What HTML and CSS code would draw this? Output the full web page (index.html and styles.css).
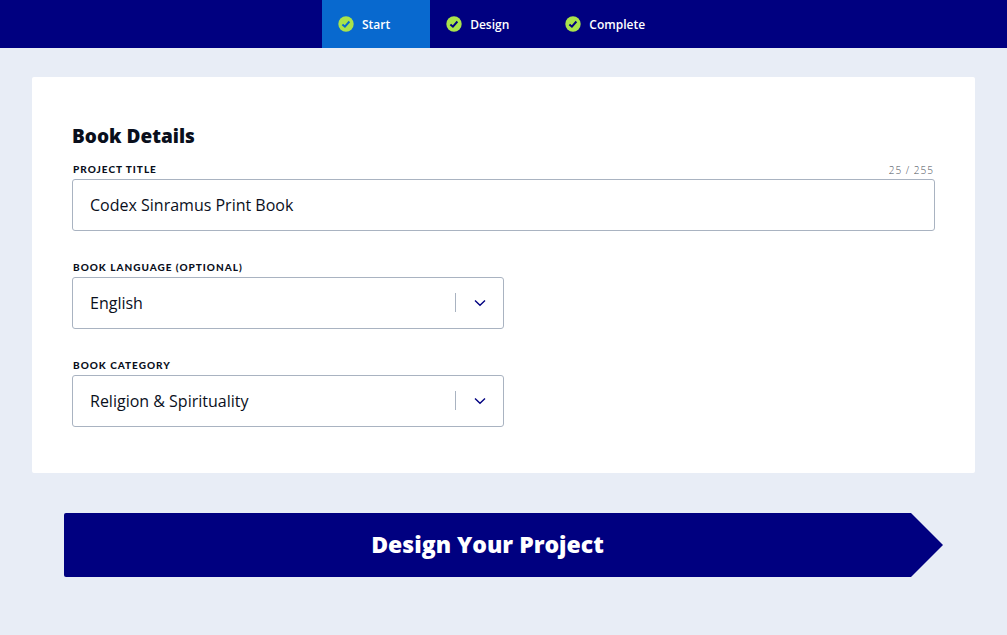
FILE: index.html
```html
<!DOCTYPE html>
<html lang="en">
<head>
<meta charset="utf-8">
<meta name="viewport" content="width=device-width, initial-scale=1">
<title>Book Details</title>
<link rel="stylesheet" href="styles.css">
</head>
<body>
<svg class="sprite" aria-hidden="true">
  <symbol id="check" viewBox="0 0 16 16">
    <circle cx="8" cy="8" r="7.7" fill="#a9e34b"/>
    <path d="M4.4 8.6 6.9 10.7 11.4 5.5" fill="none" stroke="currentColor" stroke-width="2"/>
  </symbol>
  <symbol id="chevron" viewBox="0 0 12 8">
    <path d="M1 1.5 6 6.2 11 1.5" fill="none" stroke="currentColor" stroke-width="1.4"/>
  </symbol>
</svg>
<nav class="steps" aria-label="Progress">
  <a class="step step-active" href="#start" aria-current="step"><svg class="step-icon"><use href="#check"/></svg><span>Start</span></a>
  <a class="step" href="#design"><svg class="step-icon"><use href="#check"/></svg><span>Design</span></a>
  <a class="step" href="#complete"><svg class="step-icon"><use href="#check"/></svg><span>Complete</span></a>
</nav>
<main>
  <form class="form">
    <section class="card">
      <h1 class="card-title">Book Details</h1>
      <div class="field">
        <div class="field-head">
          <label class="label" for="title">Project Title</label>
          <span class="counter">25 / 255</span>
        </div>
        <input class="control" id="title" type="text" maxlength="255" value="Codex Sinramus Print Book">
      </div>
      <div class="field field-half">
        <div class="field-head"><label class="label" for="language">Book Language (Optional)</label></div>
        <div class="select">
          <select class="control" id="language"><option>English</option></select>
          <span class="select-arrow"><svg class="chevron"><use href="#chevron"/></svg></span>
        </div>
      </div>
      <div class="field field-half">
        <div class="field-head"><label class="label" for="category">Book Category</label></div>
        <div class="select">
          <select class="control" id="category"><option>Religion &amp; Spirituality</option></select>
          <span class="select-arrow"><svg class="chevron"><use href="#chevron"/></svg></span>
        </div>
      </div>
    </section>
    <button class="submit" type="button">Design Your Project</button>
  </form>
</main>
</body>
</html>
```

FILE: styles.css
```css
* { box-sizing: border-box; }

body {
  margin: 0;
  background: #e8edf6;
  color: #0a0f1c;
  font-family: "Open Sans", "Noto Sans", sans-serif;
}

.sprite { display: none; }

.steps {
  display: flex;
  justify-content: center;
  background: #000080;
}

.step {
  display: flex;
  align-items: center;
  gap: 8px;
  height: 48px;
  padding: 0 40px 0 16px;
  color: #000080;
  font-size: 12px;
  font-weight: 600;
  text-decoration: none;
}

.step span { color: #fff; }
.step-active { background: #0869cf; color: #0869cf; }
.step-icon { width: 16px; height: 16px; }

.form { padding: 29px 32px 58px; }

.card {
  padding: 47px 40px 46px;
  background: #fff;
  border-radius: 2px;
}

.card-title {
  margin: 0 0 13px;
  font-size: 19px;
  font-weight: 800;
  line-height: 24px;
}

.field + .field { margin-top: 28px; }
.field-half { width: 50%; }

.field-head {
  display: flex;
  justify-content: space-between;
  height: 18px;
  padding: 0 1px;
  line-height: 16px;
}

.label {
  font-family: Lato, sans-serif;
  font-size: 10px;
  font-weight: 900;
  letter-spacing: 1px;
  text-transform: uppercase;
}

.counter {
  color: #4b505a;
  font-size: 10px;
  font-weight: 300;
  letter-spacing: 1px;
  line-height: 18px;
}

.control {
  display: block;
  width: 100%;
  height: 52px;
  padding: 0 17px;
  border: 1px solid #a9b3c1;
  border-radius: 3px;
  background: #fff;
  color: #0a0f1c;
  font: 16px "Open Sans", "Noto Sans", sans-serif;
  appearance: none;
}

.select { position: relative; }

.select-arrow {
  position: absolute;
  top: 16px;
  right: 0;
  display: flex;
  align-items: center;
  justify-content: center;
  width: 49px;
  height: 19px;
  border-left: 1px solid #a9b3c1;
  color: #000080;
  pointer-events: none;
}

.chevron { width: 12px; height: 8px; }

.submit {
  display: block;
  width: calc(100% - 64px);
  height: 64px;
  margin: 40px 32px 0;
  padding: 0 32px 2px 0;
  border: 0;
  border-radius: 2px;
  background: #000080;
  color: #fff;
  clip-path: polygon(0 0, calc(100% - 32px) 0, 100% 50%, calc(100% - 32px) 100%, 0 100%);
  font: 800 23px "Open Sans", "Noto Sans", sans-serif;
}
```
